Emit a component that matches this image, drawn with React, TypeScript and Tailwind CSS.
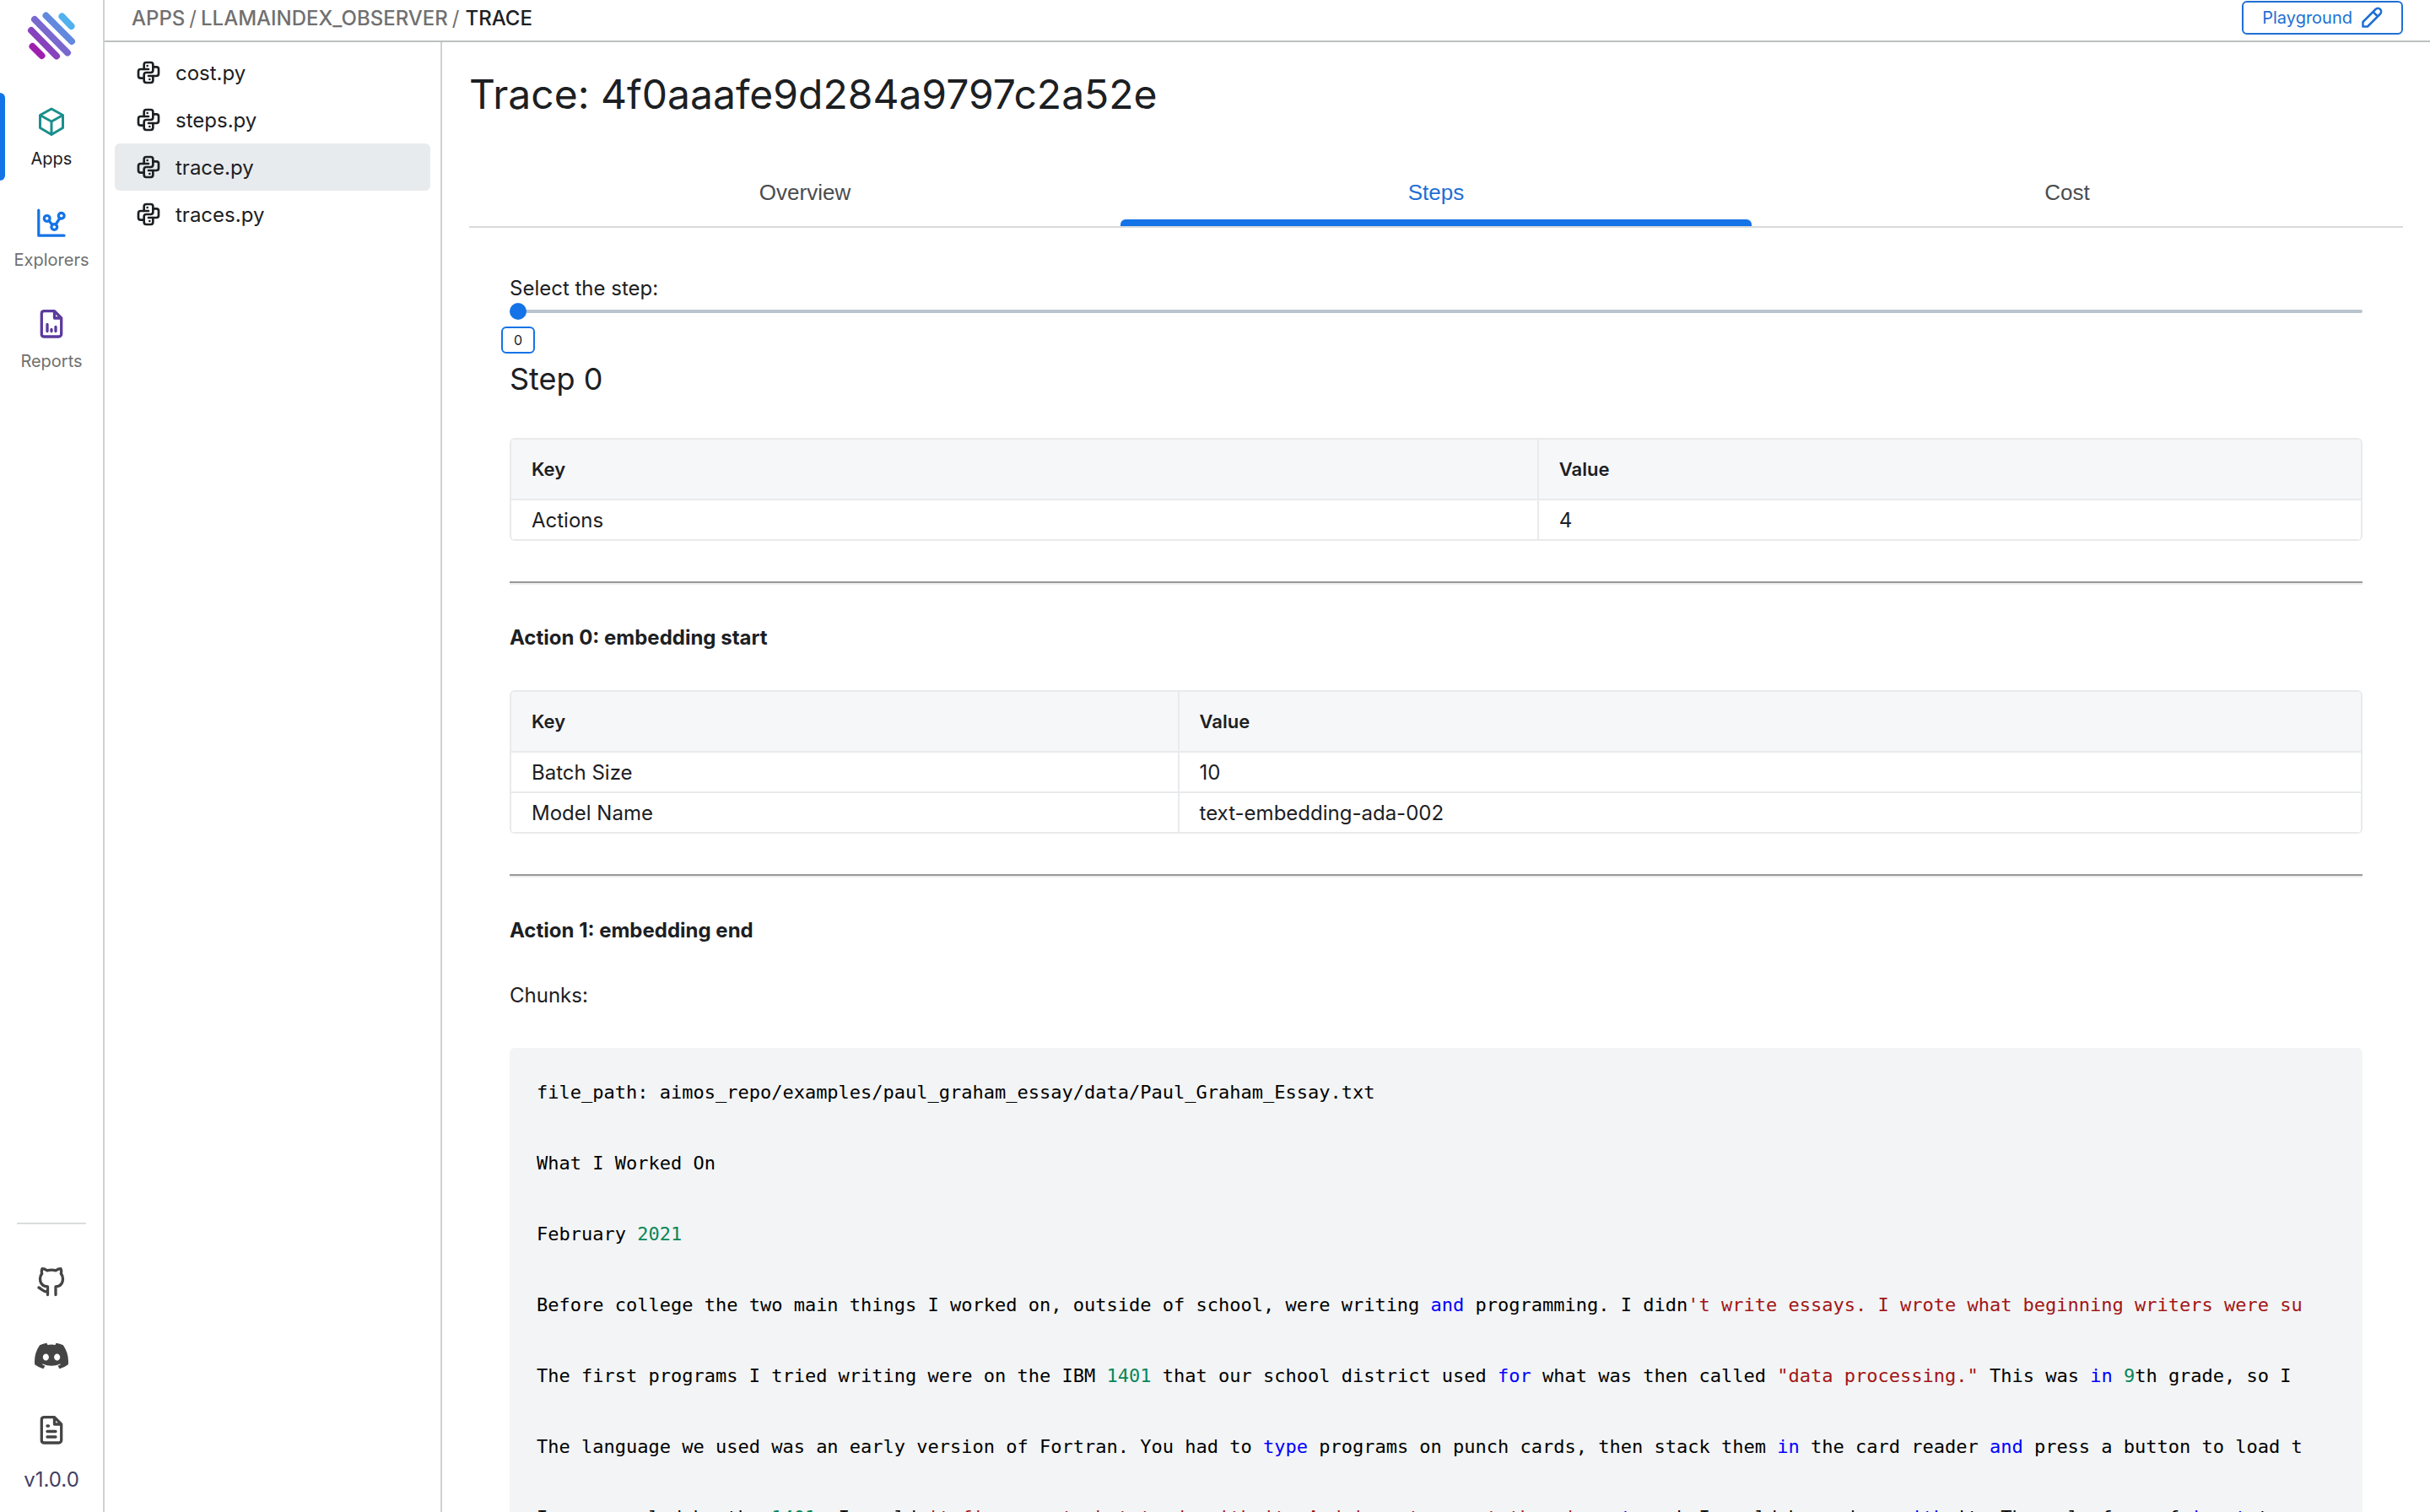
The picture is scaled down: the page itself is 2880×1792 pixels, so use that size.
import React, { useState } from "react";

const navItems = [
  { label: "Apps", icon: AppsIcon, active: true },
  { label: "Explorers", icon: ExplorersIcon, active: false },
  { label: "Reports", icon: ReportsIcon, active: false },
];

const files = ["cost.py", "steps.py", "trace.py", "traces.py"];
const tabs = ["Overview", "Steps", "Cost"];

type Token = [string, ("num" | "kw" | "str")?];

const tokenColors = {
  num: "text-[#098658]",
  kw: "text-[#0000ff]",
  str: "text-[#a31515]",
};

const codeLines: Token[][] = [
  [["file_path: aimos_repo/examples/paul_graham_essay/data/Paul_Graham_Essay.txt"]],
  [],
  [["What I Worked On"]],
  [],
  [["February "], ["2021", "num"]],
  [],
  [
    ["Before college the two main things I worked on, outside of school, were writing "],
    ["and", "kw"],
    [" programming. I didn"],
    ["'t write essays. I wrote what beginning writers were su", "str"],
  ],
  [],
  [
    ["The first programs I tried writing were on the IBM "],
    ["1401", "num"],
    [" that our school district used "],
    ["for", "kw"],
    [" what was then called "],
    ['"data processing."', "str"],
    [" This was "],
    ["in", "kw"],
    [" "],
    ["9", "num"],
    ["th grade, so I"],
  ],
  [],
  [
    ["The language we used was an early version of Fortran. You had to "],
    ["type", "kw"],
    [" programs on punch cards, then stack them "],
    ["in", "kw"],
    [" the card reader "],
    ["and", "kw"],
    [" press a button to load t"],
  ],
  [],
  [
    ["I was puzzled by the "],
    ["1401", "num"],
    [". I couldn"],
    ["'t figure out what to do with it. And in retrospect there'", "str"],
    ["s "],
    ["not", "kw"],
    [" much I could have done "],
    ["with", "kw"],
    [" it. The only form of "],
    ["input", "kw"],
    [" to"],
  ],
];

function Logo() {
  return (
    <svg width="58" height="58" viewBox="0 0 58 58" fill="none" strokeWidth="8" strokeLinecap="round" aria-hidden="true">
      <path stroke="#52b0ee" d="M41.5 6.5 L52.500 18" />
      <path stroke="#6289dd" d="M22.5 5.5 L53 36" />
      <path stroke="#7a68cf" d="M9 10 L48 49.5" />
      <path stroke="#8743bd" d="M5 23 L35 53.5" />
      <path stroke="#9d1fae" d="M6.500 42 L17.500 53" />
    </svg>
  );
}

function AppsIcon() {
  return (
    <svg width="40" height="40" viewBox="0 0 40 40" fill="none" stroke="#1a8f8d" strokeWidth="3" strokeLinejoin="round" strokeLinecap="round" aria-hidden="true">
      <path d="M20 5 L33.500 12.500 V27.500 L20 35.500 L6.500 27.500 V12.500 Z M6.500 12.500 L20 20 L33.500 12.500 M20 20 V35.500" />
    </svg>
  );
}

function ExplorersIcon() {
  return (
    <svg width="40" height="40" viewBox="0 0 40 40" fill="none" stroke="#1473e6" strokeWidth="3.200" strokeLinejoin="round" strokeLinecap="round" aria-hidden="true">
      <path d="M4.800 5 V35.200 H35 M17 17.500 L21 22.500 M25 22 L30 14.500" />
      <circle cx="14.700" cy="14.900" r="3.400" />
      <circle cx="23.300" cy="25" r="3.400" />
      <circle cx="31.700" cy="11.700" r="3.400" />
    </svg>
  );
}

function ReportsIcon() {
  return (
    <svg width="40" height="40" viewBox="0 0 40 40" fill="none" stroke="#5c3a9e" strokeWidth="3.300" strokeLinejoin="round" strokeLinecap="round" aria-hidden="true">
      <path d="M11 4.700 H23.500 L31.700 13 V32 A3 3 0 0 1 28.700 35 H11 A3 3 0 0 1 8.300 32 V7.700 A3 3 0 0 1 11 4.700 Z M23.500 5 V13 H31.500 M15 20.500 V28.500 M20 26.500 V28.500 M25 23.500 V28.500" />
    </svg>
  );
}

function PythonIcon() {
  return (
    <svg width="32" height="32" viewBox="0 0 24 24" fill="none" stroke="#1c2023" strokeWidth="2" strokeLinejoin="round" strokeLinecap="round" aria-hidden="true">
      <path d="M12 9H5a2 2 0 0 0-2 2v4a2 2 0 0 0 2 2h3" />
      <path d="M12 15h7a2 2 0 0 0 2-2V9a2 2 0 0 0-2-2h-3" />
      <path d="M8 9V5a2 2 0 0 1 2-2h4a2 2 0 0 1 2 2v5a2 2 0 0 1-2 2h-4a2 2 0 0 0-2 2v5a2 2 0 0 0 2 2h4a2 2 0 0 0 2-2v-4" />
      <path d="M11 6v.01M13 18v.01" />
    </svg>
  );
}

function GithubIcon() {
  return (
    <svg width="40" height="40" viewBox="0 0 40 40" fill="none" stroke="#444" strokeWidth="3.300" strokeLinejoin="round" strokeLinecap="round" aria-hidden="true">
      <path d="M25 35.500 V26 C30.500 25.500 33.500 22 33.500 16.500 C33.500 14 32.700 12 31.300 10.500 C31.900 8.500 31.800 6.500 31 4.700 C28.500 4.700 26.800 5.600 25.300 6.800 C22 6 18 6 14.700 6.800 C13.200 5.600 11.500 4.700 9 4.700 C8.200 6.500 8.100 8.500 8.700 10.500 C7.300 12 6.500 14 6.500 16.500 C6.500 22 9.500 25.500 15.500 26 V35.500 M15.500 32 C10.500 32.500 8.500 29 5 27" />
    </svg>
  );
}

function DiscordIcon() {
  return (
    <svg width="40" height="40" viewBox="0 0 24 24" fill="#444" aria-hidden="true">
      <path d="M20.317 4.370a19.791 19.791 0 0 0-4.885-1.515.074.074 0 0 0-.079.037c-.21.375-.444.864-.608 1.250a18.270 18.270 0 0 0-5.487 0 12.640 12.640 0 0 0-.617-1.250.077.077 0 0 0-.079-.037A19.736 19.736 0 0 0 3.677 4.370a.07.07 0 0 0-.032.027C.533 9.046-.32 13.580.099 18.058a.082.082 0 0 0 .031.056 19.900 19.900 0 0 0 5.993 3.030.078.078 0 0 0 .084-.028c.462-.63.874-1.295 1.226-1.994a.076.076 0 0 0-.041-.106 13.107 13.107 0 0 1-1.872-.892.077.077 0 0 1-.008-.128c.126-.094.252-.192.372-.291a.074.074 0 0 1 .077-.011c3.928 1.793 8.180 1.793 12.062 0a.074.074 0 0 1 .078.010c.12.099.246.198.373.292a.077.077 0 0 1-.006.128 12.299 12.299 0 0 1-1.873.891.077.077 0 0 0-.041.107c.36.698.772 1.363 1.225 1.993a.076.076 0 0 0 .084.029 19.839 19.839 0 0 0 6.002-3.030.077.077 0 0 0 .032-.055c.5-5.177-.838-9.674-3.549-13.660a.061.061 0 0 0-.031-.028zM8.020 15.331c-1.183 0-2.157-1.086-2.157-2.419s.956-2.419 2.157-2.419c1.210 0 2.176 1.095 2.157 2.419 0 1.333-.956 2.419-2.157 2.419zm7.975 0c-1.183 0-2.157-1.086-2.157-2.419s.955-2.419 2.157-2.419c1.210 0 2.176 1.095 2.157 2.419 0 1.333-.946 2.419-2.157 2.419z" />
    </svg>
  );
}

function DocsIcon() {
  return (
    <svg width="40" height="40" viewBox="0 0 40 40" fill="none" stroke="#444" strokeWidth="3.300" strokeLinejoin="round" strokeLinecap="round" aria-hidden="true">
      <path d="M11 4.700 H23.500 L31.700 13 V32 A3 3 0 0 1 28.700 35 H11 A3 3 0 0 1 8.300 32 V7.700 A3 3 0 0 1 11 4.700 Z M23.500 5 V13 H31.500 M15 15 H16.500 M15 21.500 H25 M15 28 H25" />
    </svg>
  );
}

function PencilIcon() {
  return (
    <svg width="26" height="26" viewBox="0 0 26 26" fill="none" stroke="#1f6fd4" strokeWidth="2.500" strokeLinejoin="round" aria-hidden="true">
      <path d="M2.500 23.500 V18 L17.500 3 A3.600 3.600 0 0 1 23 8.500 L8 23.500 Z M14.500 6 L20 11.500" />
    </svg>
  );
}

function KeyValueTable({ split, rows }: { split: string; rows: [string, string][] }) {
  return (
    <div className="overflow-hidden rounded-md border-2 border-b-0 border-[#e8eaec]">
      <table className="w-full table-fixed border-separate border-spacing-0 text-left">
        <colgroup>
          <col className={split} />
          <col />
        </colgroup>
        <thead className="bg-[#f6f7f9] text-[22px]">
          <tr>
            <th scope="col" className="h-[72px] border-b-2 border-r-2 border-[#e8eaec] px-6 py-0 font-semibold">Key</th>
            <th scope="col" className="h-[72px] border-b-2 border-[#e8eaec] px-6 py-0 font-semibold">Value</th>
          </tr>
        </thead>
        <tbody>
          {rows.map(([key, value]) => (
            <tr key={key}>
              <td className="h-12 border-b-2 border-r-2 border-[#e8eaec] px-6 py-0">{key}</td>
              <td className="h-12 border-b-2 border-[#e8eaec] px-6 py-0">{value}</td>
            </tr>
          ))}
        </tbody>
      </table>
    </div>
  );
}

function Divider() {
  return <hr className="my-12 h-1 border-0 border-t-2 border-[#9a9a9a] bg-[#eeeeee]" />;
}

export default function App() {
  const [step, setStep] = useState(0);

  return (
    <div className="flex h-screen overflow-hidden bg-white font-['Inter',sans-serif] text-2xl leading-[29px] text-[#1c2023]">
      <nav aria-label="Main" className="flex w-31 shrink-0 flex-col border-r-2 border-[#cfd1d2]">
        <a href="#" aria-label="Home" className="flex justify-center pt-[13px]">
          <Logo />
        </a>
        <div className="mt-[39px] flex flex-col gap-4 text-xl leading-6">
          {navItems.map(({ label, icon: Icon, active }) => (
            <a
              key={label}
              href="#"
              className={
                active
                  ? "relative flex h-26 flex-col items-center gap-3 pt-[14px]"
                  : "relative flex h-26 flex-col items-center gap-3 pt-[14px] text-[#707070]"
              }
            >
              {active && <span className="absolute inset-y-0 left-0 w-1.5 rounded-r-md bg-[#1473e6]" />}
              <Icon />
              {label}
            </a>
          ))}
        </div>
        <div className="mt-auto flex flex-col items-center gap-12 pb-6">
          <hr className="w-[82px] border-t-2 border-[#dadddd]" />
          <a href="#" aria-label="GitHub"><GithubIcon /></a>
          <a href="#" aria-label="Discord"><DiscordIcon /></a>
          <div className="flex flex-col items-center gap-6">
            <a href="#" aria-label="Documentation"><DocsIcon /></a>
            <span className="text-[#3f4066]">v1.0.0</span>
          </div>
        </div>
      </nav>

      <div className="flex min-w-0 flex-1 flex-col">
        <header className="flex h-[50px] shrink-0 items-start justify-between border-b-2 border-[#bcc0c0] px-8">
          <nav aria-label="Breadcrumb" className="flex gap-[5px] pt-[7px] font-medium text-[#707070]">
            <a href="#">APPS</a>
            <span className="font-normal">/</span>
            <a href="#">LLAMAINDEX_OBSERVER</a>
            <span className="font-normal">/</span>
            <span className="pl-0.5 text-[#1c2023]">TRACE</span>
          </nav>
          <button type="button" className="mt-px flex h-10 items-center gap-2.5 rounded-md border-2 border-[#1f6fd4] px-[22px] text-xl text-[#1f6fd4]">
            Playground
            <PencilIcon />
          </button>
        </header>

        <div className="flex min-h-0 flex-1">
          <aside className="w-[400px] shrink-0 border-r-2 border-[#cfd1d2] px-3 pt-2">
            {files.map((file) => (
              <a
                key={file}
                href="#"
                className={
                  file === "trace.py"
                    ? "flex h-14 items-center gap-4 rounded-md bg-[#e8ebee] px-6"
                    : "flex h-14 items-center gap-4 rounded-md px-6"
                }
              >
                <PythonIcon />
                {file}
              </a>
            ))}
          </aside>

          <main className="min-w-0 flex-1 overflow-hidden px-8">
            <h1 className="pt-8 text-5xl leading-[60px]">Trace: 4f0aaafe9d284a9797c2a52e</h1>

            <div role="tablist" className="mt-12 grid grid-cols-3 border-b-2 border-[#d9dbdc] px-6 font-['Liberation_Sans',sans-serif] text-[26px] text-[#4a4c4e]">
              {tabs.map((tab) => (
                <button
                  key={tab}
                  type="button"
                  role="tab"
                  aria-selected={tab === "Steps"}
                  className={
                    tab === "Steps"
                      ? "relative h-[78px] pb-0.5 text-[#1f6fd4]"
                      : "relative h-[78px] pb-0.5"
                  }
                >
                  {tab}
                  {tab === "Steps" && <span className="absolute inset-x-0 bottom-0 h-2 rounded-t-md bg-[#1473e6]" />}
                </button>
              ))}
            </div>

            <section role="tabpanel" aria-label="Steps" className="px-12 pt-[57px]">
              <label htmlFor="step" className="block">Select the step:</label>
              <div className="relative mt-[3px] h-5">
                <input
                  id="step"
                  type="range"
                  min={0}
                  max={8}
                  value={step}
                  onChange={(e) => setStep(Number(e.target.value))}
                  className="block h-5 w-full cursor-pointer appearance-none bg-transparent [&::-webkit-slider-runnable-track]:h-1 [&::-webkit-slider-runnable-track]:rounded-full [&::-webkit-slider-runnable-track]:bg-[#b8c4ce] [&::-webkit-slider-thumb]:-mt-2 [&::-webkit-slider-thumb]:size-5 [&::-webkit-slider-thumb]:appearance-none [&::-webkit-slider-thumb]:rounded-full [&::-webkit-slider-thumb]:bg-[#1473e6]"
                />
                <output
                  htmlFor="step"
                  className="absolute -left-2.5 top-7 flex h-8 w-10 items-center justify-center rounded-md border-2 border-[#1473e6] bg-white text-base"
                >
                  {step}
                </output>
              </div>
              <h2 className="mt-12 text-4xl leading-11">Step {step}</h2>

              <div className="mt-12">
                <KeyValueTable split="w-5/9" rows={[["Actions", "4"]]} />
              </div>
              <Divider />
              <h3 className="font-bold">Action 0: embedding start</h3>
              <div className="mt-12">
                <KeyValueTable split="w-13/36" rows={[["Batch Size", "10"], ["Model Name", "text-embedding-ada-002"]]} />
              </div>
              <Divider />
              <h3 className="font-bold">Action 1: embedding end</h3>
              <p className="mt-12">Chunks:</p>

              <div className="mt-12 rounded-md bg-[#f2f4f5] py-8 pl-8 pr-16">
                <pre className="overflow-hidden font-['DejaVu_Sans_Mono',monospace] text-[22px] leading-[42px] text-black">
                  {codeLines.map((tokens, i) => (
                    <code key={i} className="block h-[42px] font-['DejaVu_Sans_Mono',monospace]">
                      {tokens.map(([text, kind], j) => (
                        <span key={j} className={kind ? tokenColors[kind] : undefined}>{text}</span>
                      ))}
                    </code>
                  ))}
                </pre>
              </div>
            </section>
          </main>
        </div>
      </div>
    </div>
  );
}
